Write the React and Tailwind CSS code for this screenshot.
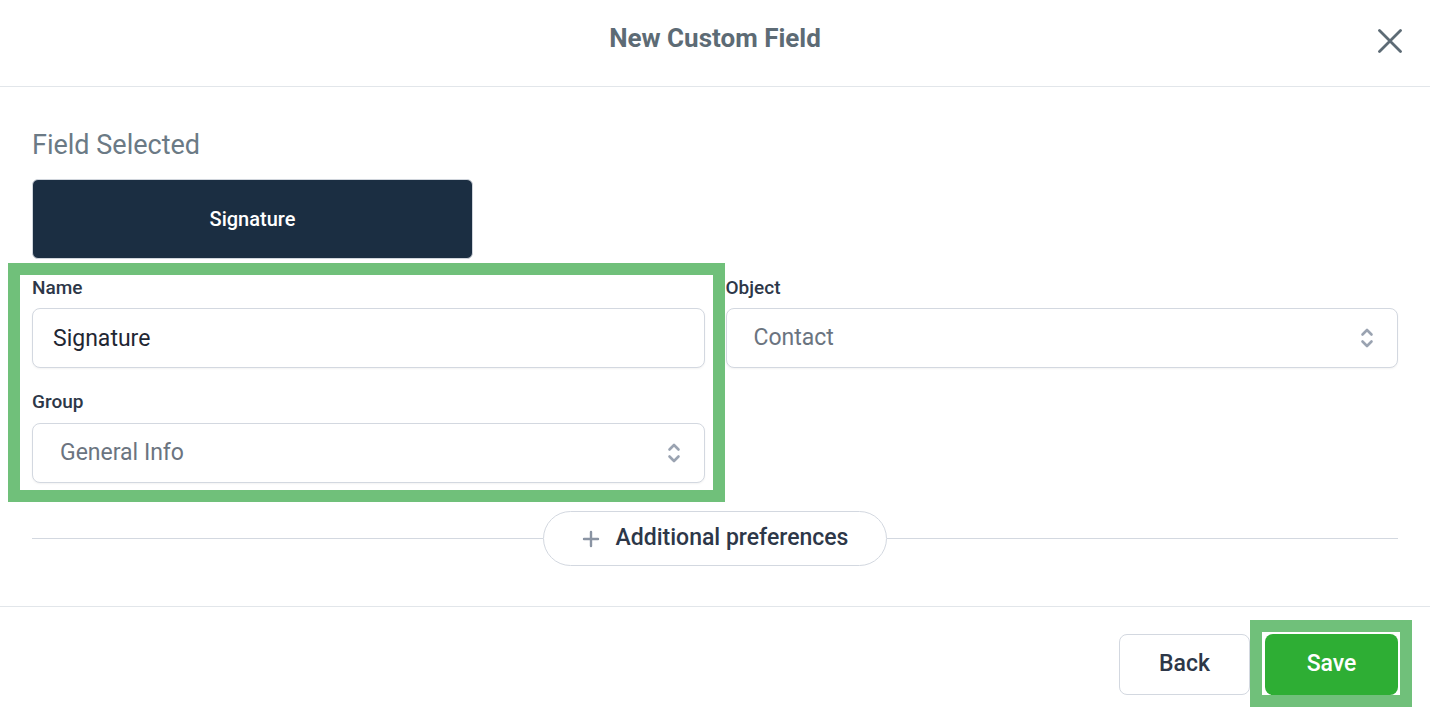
import { useState } from "react";

function UpDown() {
  return (
    <svg width="14" height="24" viewBox="0 0 14 24" fill="none" stroke="#9aa3b1" strokeWidth="2.6" strokeLinecap="round" strokeLinejoin="round">
      <path d="M2.5 8.5 7 4l4.5 4.5" />
      <path d="M2.5 15.5 7 20l4.5-4.5" />
    </svg>
  );
}

function Label({ children }) {
  return <div className="text-[19px] font-medium leading-6 text-[#2d3748]">{children}</div>;
}

function SelectBox({ value, className = "mt-[9px]" }) {
  return (
    <div className={`${className} flex h-[60px] items-center justify-between rounded-lg border border-[#d3d8e0] bg-white pl-[27px] pr-[23px] shadow-[0_1px_2px_rgba(0,0,0,0.05)]`}>
      <span className="text-[23px] text-[#6b7480]">{value}</span>
      <UpDown />
    </div>
  );
}

export default function App() {
  const [name, setName] = useState("Signature");
  return (
    <div className="flex h-[714px] w-full flex-col bg-white font-['Roboto',sans-serif]">
      <div className="relative flex h-[87px] shrink-0 items-center justify-center border-b border-[#e2e6ea]">
        <h1 className="-mt-[9px] text-[26px] font-bold text-[#5d6b75]">New Custom Field</h1>
        <button className="absolute right-[28px] top-[29px]">
          <svg width="24" height="24" viewBox="0 0 24 24" stroke="#5d6b75" strokeWidth="2.8" strokeLinecap="round">
            <path d="M1.5 1.5 22.5 22.5M22.5 1.5 1.5 22.5" />
          </svg>
        </button>
      </div>

      <div className="flex-1 px-8 pt-[42px]">
        <div className="h-8 text-[27px] leading-8 text-[#6b7a85]">Field Selected</div>
        <button className="mt-[18px] flex h-[80px] w-[441px] items-center justify-center rounded-md border border-[#d0d5dc] bg-[#1b2e42] text-[20px] font-medium text-white">
          Signature
        </button>

        <div className="mt-[17px] grid grid-cols-2 gap-x-[21px]">
          <div className="relative">
            <div className="pointer-events-none absolute -bottom-[19px] -left-[24px] -right-[20px] -top-[13px] border-[12px] border-[#70c07a]" />
            <Label>Name</Label>
            <input
              value={name}
              onChange={(e) => setName(e.target.value)}
              className="mt-[8px] h-[60px] w-full rounded-lg border border-[#d3d8e0] bg-white px-[20px] text-[23px] text-[#1f2733] shadow-[0_1px_2px_rgba(0,0,0,0.05)] outline-none"
            />
            <div className="mt-[22px]">
              <Label>Group</Label>
              <SelectBox value="General Info" />
            </div>
          </div>
          <div>
            <Label>Object</Label>
            <SelectBox value="Contact" className="mt-[8px]" />
          </div>
        </div>

        <div className="mt-[28px] flex items-center">
          <div className="h-px flex-1 bg-[#d3d8e0]" />
          <button className="flex h-[55px] w-[344px] items-center justify-center gap-[16px] rounded-full border border-[#d3d8e0] bg-white text-[23px] font-medium text-[#2d3748]">
            <svg width="18" height="18" viewBox="0 0 18 18" stroke="#8a94a3" strokeWidth="2.4" strokeLinecap="round">
              <path d="M9 2v14M2 9h14" />
            </svg>
            Additional preferences
          </button>
          <div className="h-px flex-1 bg-[#d3d8e0]" />
        </div>
      </div>

      <div className="flex h-[108px] shrink-0 items-start justify-end gap-[15px] border-t border-[#e2e6ea] pr-8 pt-[27px]">
        <button className="h-[61px] w-[131px] rounded-lg border border-[#d3d8e0] bg-white text-[23px] font-medium text-[#2d3748]">Back</button>
        <div className="relative">
          <div className="pointer-events-none absolute -bottom-[12px] -left-[15px] -right-[14px] -top-[14px] border-[12px] border-[#70c07a]" />
          <button className="h-[61px] w-[133px] rounded-lg bg-[#2eae34] text-[23px] font-medium text-white">Save</button>
        </div>
      </div>
    </div>
  );
}
